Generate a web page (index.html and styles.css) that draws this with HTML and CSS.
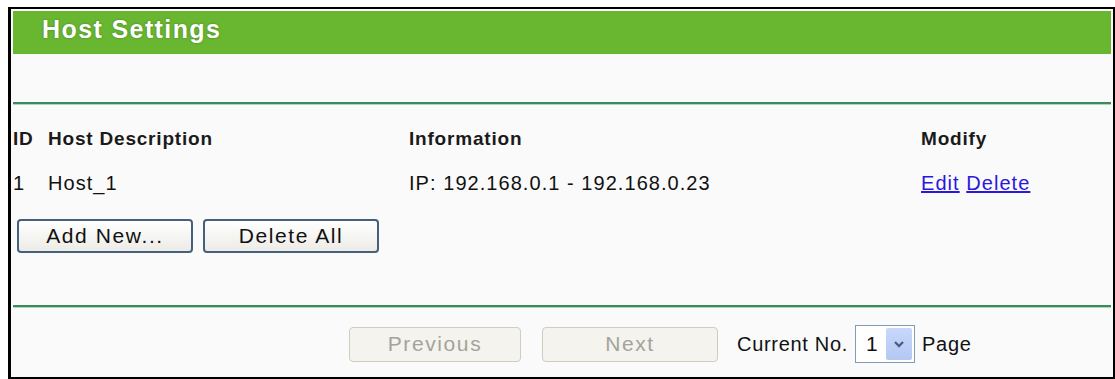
FILE: index.html
```html
<!DOCTYPE html>
<html>
<head>
<meta charset="utf-8">
<link rel="stylesheet" href="styles.css">
</head>
<body>
<div class="frame">
  <div class="title">Host Settings</div>
  <div class="blank"></div>
  <div class="rule"></div>
  <div class="table">
    <div class="row head">
      <span>ID</span><span>Host Description</span><span>Information</span><span>Modify</span>
    </div>
    <div class="row">
      <span>1</span><span>Host_1</span><span>IP: 192.168.0.1 - 192.168.0.23</span><span><a href="#">Edit</a> <a href="#">Delete</a></span>
    </div>
  </div>
  <div class="actions">
    <button class="btn">Add New...</button>
    <button class="btn">Delete All</button>
  </div>
  <div class="rule rule-low"></div>
  <div class="pager">
    <button class="btn btn-prev" disabled>Previous</button>
    <button class="btn btn-next" disabled>Next</button>
    <span class="label label-first">Current No.</span>
    <div class="select">
      <span class="select-val">1</span>
      <span class="select-arrow"><svg width="12" height="10" viewBox="0 0 12 10"><path d="M2 3 L6 7 L10 3" fill="none" stroke="#4b5f86" stroke-width="2.4"/></svg></span>
    </div>
    <span class="label">Page</span>
  </div>
</div>
</body>
</html>
```
FILE: styles.css
```css
html, body {
  margin: 0;
  padding: 0;
  background: #ffffff;
}
body {
  font-family: "Liberation Sans", Arial, sans-serif;
  color: #111;
}
.frame {
  margin: 7px 0 0 8px;
  width: 1098px;
  height: 364px;
  border: 2px solid #000;
  border-left-width: 3px;
  border-right-width: 3px;
  padding: 2px;
  background: #fafafa;
  box-sizing: content-box;
  overflow: hidden;
}
.title {
  height: 43px;
  background: #69b631;
  color: #fff;
  font-weight: bold;
  font-size: 25px;
  line-height: 36px;
  padding-left: 29px;
  text-shadow: 0 0 2px rgba(40, 80, 20, 0.6);
  letter-spacing: 1.4px;
}
.blank {
  height: 48px;
}
.rule {
  height: 2px;
  background: #3d8a5c;
  border-bottom: 1px solid #a8d8bd;
}
.table {
  margin-top: 12px;
}
.row {
  display: grid;
  grid-template-columns: 35px 361px 512px 1fr;
  font-size: 20px;
  height: 44px;
  align-items: center;
  letter-spacing: 1.05px;
}
.row.head {
  font-weight: bold;
  font-size: 19px;
  letter-spacing: 0.8px;
  color: #1a1a1a;
}
.row a {
  color: #2a18dc;
  text-decoration: underline;
}
.actions {
  display: flex;
  gap: 10px;
  padding-left: 4px;
  margin-top: 14px;
}
.btn {
  width: 176px;
  height: 34px;
  font-family: "Liberation Sans", Arial, sans-serif;
  font-size: 21px;
  color: #111;
  background: linear-gradient(#ffffff, #ecebe6);
  border: 2px solid #46607c;
  border-radius: 4px;
  padding: 0;
  letter-spacing: 1.6px;
}
.rule-low {
  margin-top: 52px;
}
.pager {
  display: flex;
  align-items: center;
  padding-left: 336px;
  margin-top: 17px;
}
.btn[disabled] {
  color: #a3a39a;
  background: #f4f3ee;
  border: 1px solid #cfcdc0;
  height: 35px;
}
.btn-prev {
  width: 172px;
}
.btn-next {
  margin-left: 21px;
}
.label {
  font-size: 20px;
  letter-spacing: 0.7px;
}
.label-first {
  margin-left: 19px;
}
.select {
  display: flex;
  align-items: stretch;
  height: 38px;
  width: 60px;
  margin: 0 7px 0 7px;
  border: 1px solid #7f9db9;
  background: #fff;
  box-sizing: border-box;
  padding: 2px;
}
.select-val {
  flex: 1;
  font-size: 21px;
  display: flex;
  align-items: center;
  padding-left: 8px;
}
.select-arrow {
  width: 26px;
  background: linear-gradient(#c8d8fb, #b4c8f2);
  border-radius: 2px;
  display: flex;
  align-items: center;
  justify-content: center;
}
```
